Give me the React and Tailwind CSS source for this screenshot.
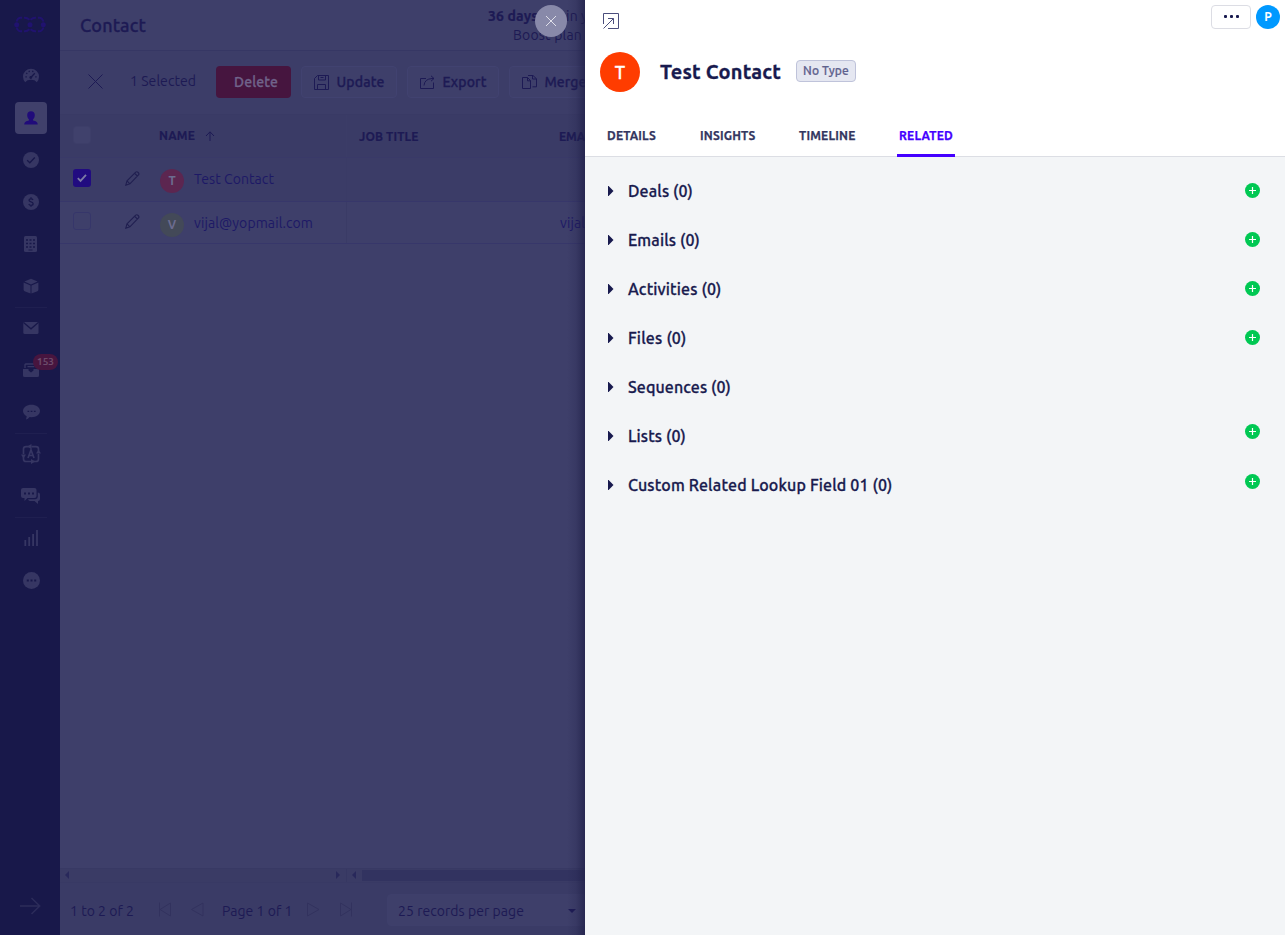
import { useLayoutEffect, useRef, useState } from "react";

/* Text set to a fixed advance width: the tracking is derived from its natural width. */
function Fit({ w, className = "", children }) {
  const ref = useRef(null);
  const [spacing, setSpacing] = useState(0);
  useLayoutEffect(() => {
    const el = ref.current;
    const natural = el.getBoundingClientRect().width;
    setSpacing((w - natural) / String(children).length);
  }, [w, children]);
  return (
    <span ref={ref} className={`inline-block shrink-0 whitespace-nowrap ${className}`} style={{ letterSpacing: spacing }}>
      {children}
    </span>
  );
}

const Svg = ({ className = "", box = "0 0 16 16", sw = 1, children }) => (
  <svg viewBox={box} className={`shrink-0 ${className}`} fill="none" stroke="currentColor" strokeWidth={sw}>
    {children}
  </svg>
);

const BG = "#18184a";

const GaugeIcon = () => (
  <Svg className="h-4 w-4">
    <path d="M2.2 14.200A8 8 0 1 1 13.800 14.200Q12 11.800 8 11.800T2.200 14.200Z" fill="currentColor" stroke="none" />
    <path d="M2.400 8.800h1.400M3.200 5l1.100.8M6 2.800l.4 1.300M10 2.800l-.4 1.300M13.600 8.800h-1.400M7.800 9.500l4-4.300" stroke={BG} strokeWidth="1.300" />
    <circle cx="7.800" cy="9.500" r="1.400" fill={BG} stroke="none" />
  </Svg>
);
const UserIcon = () => (
  <Svg className="h-[14px] w-[14px]" box="0 0 14 14">
    <path d="M7 0.3c2.4 0 3.8 1.5 3.8 3.7 0 1.7-.6 3.3-1.7 4.2v1.2c2.6.6 4.6 1.2 4.6 4H.3c0-2.8 2-3.4 4.6-4V8.2C3.8 7.300 3.200 5.700 3.200 4 3.200 1.800 4.600.3 7 .3Z" fill="currentColor" stroke="none" />
  </Svg>
);
const CheckIcon = () => (
  <Svg className="h-4 w-4">
    <circle cx="8" cy="8" r="8" fill="currentColor" stroke="none" />
    <path d="M4.200 8.300l2.600 2.500 5-5.300" stroke={BG} strokeWidth="1.300" />
  </Svg>
);
const DollarIcon = () => (
  <Svg className="h-4 w-4">
    <circle cx="8" cy="8" r="8" fill="currentColor" stroke="none" />
    <path d="M10 5.900C9.600 5.100 8.900 4.800 8 4.800c-1.200 0-2 .6-2 1.500 0 2.200 4.100 1.100 4.100 3.400 0 1-.9 1.600-2.100 1.600-1 0-1.800-.4-2.200-1.300M8 3.300v1.500M8 11.200v1.600" stroke={BG} strokeWidth="1.300" />
  </Svg>
);
const BuildingIcon = () => (
  <Svg className="mr-px h-4 w-[13px]" box="0 0 13 16">
    <rect width="13" height="16" rx="1.500" fill="currentColor" stroke="none" />
    <path d="M2 4h2M5.500 4h2M9 4h2M2 7.500h2M5.500 7.500h2M9 7.500h2M2 11h2M5.500 11h2M9 11h2" stroke={BG} strokeWidth="1.600" />
    <path d="M4.500 14h4" stroke={BG} />
  </Svg>
);
const BoxIcon = () => (
  <Svg className="h-4 w-4">
    <path d="M8 .8l6.600 2.600L8 6.600 1.400 3.400ZM.6 4.500l6.900 3v8L1.600 13.200Q.6 12.800.6 11.800ZM15.400 4.500l-6.900 3v8l5.900-2.300q1-.4 1-1.400Z" fill="currentColor" stroke="none" />
  </Svg>
);
const MailIcon = () => (
  <Svg className="h-3 w-4" box="0 0 16 12">
    <rect x=".3" width="15.200" height="12" rx="1.500" fill="currentColor" stroke="none" />
    <path d="M.8.8L8 6.800 15 .8" stroke={BG} strokeWidth="1.300" />
  </Svg>
);
const InboxIcon = () => (
  <Svg className="h-[14px] w-4" box="0 0 16 14">
    <path d="M2 5V1.800Q2 1 2.800 1H14V5M4.500 3.600h7" strokeWidth="1.300" />
    <path d="M0 6h5.500v1.500l2.500 2 2.500-2V6H16v6.500q0 1.500-1.500 1.500h-13Q0 14 0 12.500Z" fill="currentColor" stroke="none" />
  </Svg>
);
const ChatIcon = () => (
  <Svg className="h-4 w-[17px]" box="0 0 17 16">
    <path d="M8.500.8c4.700 0 8.500 2.700 8.500 6.200s-3.800 6.200-8.500 6.200l-1.900-.1Q5 15.500 3 15.500l.7-3.300C1.500 11 0 9.100 0 7 0 3.500 3.800.8 8.500.8Z" fill="currentColor" stroke="none" />
    <path d="M4.500 7.300h1.700M7.700 7.300h1.700M10.900 7.300h1.700" stroke={BG} strokeWidth="1.300" />
  </Svg>
);
const AutomationIcon = () => (
  <Svg className="h-5 w-5" box="0 0 20 20" sw="1.700">
    <path d="M7.500 2.600H5Q2.500 2.600 2.500 5v5M10.500 2.600H15q2.500 0 2.500 2.400v2M2.500 12.500V15q0 2.500 2.500 2.500h5M12.500 17.500H15q2.500 0 2.500-2.500v-5" />
    <path d="M6 2.600L10.500 0v5.200ZM2.500 14.500L0 10.500h5ZM14.500 17.500L10 20v-5ZM17.500 5.500L20 9.500h-5Z" fill="currentColor" stroke="none" />
    <path d="M7 14l3-8 3 8M8 11.500h4" />
  </Svg>
);
const ChatsIcon = () => (
  <Svg className="mr-[2px] h-4 w-[19px]" box="0 0 19 16">
    <path d="M2 0h11.500q2 0 2 2v6q0 2-2 2H6.500L3.500 13v-3H2Q0 10 0 8V2Q0 0 2 0Z" fill="currentColor" stroke="none" />
    <path d="M16.800 4.500q2.200 0 2.200 2V11q0 2-2 2v3l-3.500-3H9q-1.500 0-2-1.800h7.300q2.500 0 2.500-2.400Z" fill="currentColor" stroke="none" />
    <path d="M3 5.500h2M7 5.500h2M11 5.500h2" stroke={BG} strokeWidth="2" />
  </Svg>
);
const BarsIcon = () => (
  <Svg className="h-4 w-[14px]" box="0 0 14 16" sw="1.800">
    <path d="M1.300 16v-6M5.200 16V7M9.100 16V4M13 16V0" />
  </Svg>
);
const MoreIcon = () => (
  <Svg className="h-[17px] w-[17px]" box="0 0 17 17">
    <circle cx="8.500" cy="8.500" r="8.500" fill="currentColor" stroke="none" />
    <path d="M3.800 8.500h2M7.500 8.500h2M11.200 8.500h2" stroke={BG} strokeWidth="2" />
  </Svg>
);

const nav = [
  { icon: GaugeIcon },
  { icon: UserIcon, active: true },
  { icon: CheckIcon },
  { icon: DollarIcon },
  { icon: BuildingIcon },
  { icon: BoxIcon },
  { icon: MailIcon, divided: true },
  { icon: InboxIcon, badge: "153" },
  { icon: ChatIcon },
  { icon: AutomationIcon, divided: true },
  { icon: ChatsIcon },
  { icon: BarsIcon, divided: true },
  { icon: MoreIcon },
];

function Sidebar() {
  return (
    <aside className="flex w-[60px] shrink-0 flex-col bg-[#18184a] text-[#363663]">
      <div className="flex h-[55px] shrink-0 items-start pl-[14px] pt-4">
        <svg viewBox="0 0 32 17" className="h-[17px] w-8 text-[#20126f]" fill="none" stroke="currentColor" strokeWidth="1.900">
          <path d="M2.500 5.500Q4 1.700 6.500 1.700H8M2.500 11.500Q4 15.300 6.500 15.300H8M10 1.800q3-.3 5.500 1.900M10 15.200q3 .3 5.500-1.900M22 1.800q-3-.3-5.500 1.900M22 15.200q-3 .3-5.500-1.900M24 1.700h1.500q2.500 0 4 3.800M24 15.300h1.500q2.500 0 4-3.800" />
          <g fill="currentColor" stroke="none">
            <circle cx="2.700" cy="8.700" r="2.500" />
            <circle cx="16" cy="8.700" r="2.500" />
            <circle cx="29.300" cy="8.700" r="2.500" />
          </g>
        </svg>
      </div>
      <nav className="flex flex-col">
        {nav.map(({ icon: Icon, active, divided, badge }, i) => (
          <div key={i} className={`relative ml-[15px] flex h-[42px] w-8 items-center justify-center border-t pb-px ${divided ? "border-[#1f1f50]" : "border-transparent"}`}>
            {active ? (
              <span className="flex h-8 w-8 items-center justify-center rounded-[4px] bg-[#40406b] text-[#200b7a]">
                <Icon />
              </span>
            ) : (
              <Icon />
            )}
            {badge && (
              <span className="absolute left-[18px] top-[4px] flex h-4 w-[25px] items-center justify-center rounded-full bg-[#47153f] text-[10px] font-medium leading-none text-[#70506f] [-webkit-text-stroke:0.2px]">
                <Fit w={17}>{badge}</Fit>
              </span>
            )}
          </div>
        ))}
      </nav>
      <div className="mt-auto pb-[20px] pl-5">
        <svg viewBox="0 0 21 18" className="h-[18px] w-[21px] text-[#2c2c5a]" fill="none" stroke="currentColor" strokeWidth="1.500">
          <path d="M0 9h20M11.500 1l8.200 8-8.200 8" />
        </svg>
      </div>
    </aside>
  );
}

const SaveIcon = () => (
  <Svg className="h-[15px] w-[15px]" box="0 0 15 15">
    <path d="M3.500.5h11v14H.5V3.500ZM4.500.5v4.500h7V.5M3.500 14.500v-5h8v5M6.500 2.500h3" />
  </Svg>
);
const ExportIcon = () => (
  <Svg className="h-[15px] w-[15px]" box="0 0 15 15">
    <path d="M6 3.500H.5v10h13v-6M4 10.500Q4.500 4 12 3.500h2M11 .8l3 2.700-3 2.700" />
  </Svg>
);
const MergeIcon = () => (
  <Svg className="h-[15px] w-[15px]" box="0 0 15 15">
    <path d="M.5 2.500h5l3 3v8h-8ZM5.500 2.500v3.300h3M6 .5h5l3.500 3.300v8H10.500M10.500.5v3.500h4" />
  </Svg>
);

function ToolButton({ icon: Icon, label, textW, className }) {
  return (
    <button className={`flex h-8 shrink-0 items-center rounded-[4px] border border-[#414270] bg-[#3e3f6a] pl-[12px] text-[14px] font-medium [-webkit-text-stroke:0.3px] ${className}`}>
      <Icon />
      <Fit w={textW} className="ml-[7.500px]">{label}</Fit>
    </button>
  );
}

const Pencil = () => (
  <Svg className="h-[15px] w-[15px] text-[#201f50]" box="0 0 15 15" sw="1.100">
    <path d="M.8 14.200l1.200-4.300L10.700 1.200q1.200-1 2.500.3t.3 2.500L4.900 12.800ZM9.700 2.300l2.700 2.700M2 9.900l2.900 2.900" />
  </Svg>
);

function Row({ initial, avatar, name, nameW, email, className, checked, textPos }) {
  return (
    <div className={`flex shrink-0 items-center border-b border-[#37376a] ${className}`}>
      <div className="flex h-full w-[287px] shrink-0 items-center border-r border-[#3a3b66] pl-[13px]">
        {checked ? (
          <span className="mb-[3px] flex h-[18px] w-[18px] items-center justify-center rounded-[3px] bg-[#210b80] text-[#7c7aa5]">
            <Svg className="h-3 w-3" box="0 0 12 12" sw="1.800"><path d="M1.800 6.200l2.700 2.700 5.500-6" /></Svg>
          </span>
        ) : (
          <span className="mb-[3px] h-[18px] w-[18px] rounded-[3px] border border-[#36366a]" />
        )}
        <span className="mb-[2px] ml-[34px] flex"><Pencil /></span>
        <span className={`ml-[20px] flex h-6 w-6 items-center justify-center rounded-full text-[12px] font-bold text-[#6c6c90] ${avatar}`}>{initial}</span>
        <Fit w={nameW} className={`ml-[10px] text-[14px] text-[#1d1966] ${textPos}`}>{name}</Fit>
      </div>
      <div className="w-[213px] shrink-0" />
      {email && <Fit w={119} className={`text-[14px] text-[#1d1966] ${textPos}`}>{email}</Fit>}
    </div>
  );
}

const Tri = ({ d, className }) => (
  <svg viewBox="0 0 15 15" className={`mb-[4px] h-[15px] w-[15px] shrink-0 text-[#32325e] ${className}`} fill="none" stroke="currentColor">
    <path d={d} />
  </svg>
);

function ContactList() {
  return (
    <main className="relative flex w-[525px] shrink-0 flex-col overflow-hidden bg-[#3e3f6a] text-[#1d1a54]">
      <header className="flex h-[51px] shrink-0 border-b border-[#363764] pl-5">
        <Fit w={66} className="pt-[12px] text-[18px] font-medium leading-[26px] [-webkit-text-stroke:0.3px]">Contact</Fit>
        <div className="ml-[342px] flex w-[200px] shrink-0 flex-col items-start pt-[7px] text-[14px] leading-[19px]">
          <div className="flex">
            <Fit w={50} className="font-bold [-webkit-text-stroke:0.2px]">36 days</Fit>
            <Fit w={25} className="ml-[3px]">left</Fit>
            <Fit w={12}>in</Fit>
            <span className="ml-[3px] whitespace-nowrap">your trial</span>
          </div>
          <Fit w={69} className="ml-[25px]">Boost plan</Fit>
        </div>
      </header>

      <div className="flex h-[64px] shrink-0 items-center border-b border-[#393a65] bg-[#3c3d68] pb-px pl-[27.500px]">
        <Svg className="mb-[2px] h-[15px] w-[15px]" box="0 0 15 15"><path d="M.5.5l14 14M14.500.5l-14 14" /></Svg>
        <Fit w={66} className="mb-[2px] ml-[27.500px] text-[14px]">1 Selected</Fit>
        <button className="ml-5 flex h-8 w-[75px] shrink-0 items-center rounded-[4px] bg-[#46153f] pl-[18px] text-[14px] font-medium text-[#70638a] [-webkit-text-stroke:0.3px]">
          <Fit w={44}>Delete</Fit>
        </button>
        <ToolButton icon={SaveIcon} label="Update" textW={48} className="ml-[10px] w-[96px]" />
        <ToolButton icon={ExportIcon} label="Export" textW={44} className="ml-[10px] w-[92px]" />
        <ToolButton icon={MergeIcon} label="Merge" textW={42} className="ml-[10px] w-[92px]" />
      </div>

      <div className="flex h-[43px] shrink-0 items-center border-b border-[#37386a]/50 bg-[#3a3b66] text-[12px] font-bold [-webkit-text-stroke:0.2px]">
        <div className="flex h-full w-[287px] shrink-0 items-center border-r border-[#3b3c67] pl-[13px]">
          <span className="mb-[2px] h-[18px] w-[18px] rounded-[3px] border border-[#3d3e69] bg-[#40416c]" />
          <Fit w={36} className="ml-[68px]">NAME</Fit>
          <Svg className="ml-[10px] h-[10px] w-[10px]" box="0 0 10 10"><path d="M5 10V1M1 5l4-4.200L9 5" /></Svg>
        </div>
        <Fit w={59.5} className="ml-[12px] mt-px">JOB TITLE</Fit>
        <Fit w={36} className="ml-[140.500px] mt-px">EMAIL</Fit>
      </div>

      <Row checked className="h-11 bg-[#3b3c67]" initial="T" avatar="mt-[3px] bg-[#5c2650]" name="Test Contact" nameW={80} textPos="mb-px" />
      <Row className="h-[42px]" initial="V" avatar="mt-[5px] bg-[#434958]" name="vijal@yopmail.com" nameW={119} email="vijal@yopmail.com" textPos="mt-px" />

      <div className="flex-1" />

      <div className="flex h-[15px] shrink-0 items-center border-y border-[#383964] bg-[#3a3b65] text-[#28285b]">
        <div className="flex h-full w-[287px] shrink-0 items-center justify-between border-r border-[#363762] pb-px pl-[5px] pr-[6px]">
          <svg viewBox="0 0 4 8" className="h-2 w-1"><path d="M4 0v8L0 4Z" fill="currentColor" /></svg>
          <svg viewBox="0 0 4 8" className="h-2 w-1"><path d="M0 0v8l4-4Z" fill="currentColor" /></svg>
        </div>
        <svg viewBox="0 0 4 8" className="mb-px ml-[5px] h-2 w-1"><path d="M4 0v8L0 4Z" fill="currentColor" /></svg>
        <div className="ml-[6px] h-[11px] flex-1 bg-[#323360]" />
      </div>

      <footer className="flex h-[52px] shrink-0 items-center bg-[#3a3b66] pl-[10px] pt-[4px] text-[14px]">
        <Fit w={64}>1 to 2 of 2</Fit>
        <Tri d="M2.500.5v14M13.500 1v13L3 7.500Z" className="ml-[23px]" />
        <Tri d="M13 1v13L1.500 7.500Z" className="ml-[18px]" />
        <Fit w={70.5} className="ml-[17px]">Page 1 of 1</Fit>
        <Tri d="M1.500 1v13L13 7.500Z" className="ml-[13.500px]" />
        <Tri d="M12.500.5v14M1.500 1v13L12 7.500Z" className="ml-[18px]" />
        <div className="mb-[2px] ml-[33px] flex h-8 w-[200px] shrink-0 items-center rounded-[4px] border border-[#3e3f6b] bg-[#3e3f6a] pl-[10px]">
          <Fit w={126} className="mt-[2px]">25 records per page</Fit>
          <svg viewBox="0 0 8 4" className="ml-[44px] mt-px h-1 w-2"><path d="M0 0h8L4 4Z" fill="currentColor" /></svg>
        </div>
      </footer>

      <div className="pointer-events-none absolute inset-y-0 right-0 w-[18px] bg-gradient-to-r from-transparent via-[#202049]/20 to-[#202049]/75" />
      <button className="absolute left-[475px] top-[5px] flex h-8 w-8 items-center justify-center rounded-full bg-[#8889a9] text-[#e0e0ea]">
        <Svg className="h-[10px] w-[10px]" box="0 0 10 10"><path d="M0 0l10 10M10 0L0 10" /></Svg>
      </button>
    </main>
  );
}

const tabs = [
  { label: "DETAILS", w: 49, box: "w-[54px]" },
  { label: "INSIGHTS", w: 55.5, box: "w-[60px]" },
  { label: "TIMELINE", w: 56.5, box: "w-[61px]" },
  { label: "RELATED", w: 54, box: "w-[58px]", active: true },
];

const related = [
  { label: "Deals (0)", w: 65, add: "mb-px" },
  { label: "Emails (0)", w: 72, add: "mb-px" },
  { label: "Activities (0)", w: 93.5, add: "mb-px" },
  { label: "Files (0)", w: 58.5, add: "mb-px" },
  { label: "Sequences (0)", w: 103 },
  { label: "Lists (0)", w: 58, add: "mb-[9px]" },
  { label: "Custom Related Lookup Field 01 (0)", w: 264.5, add: "mb-[7px]" },
];

function ContactPanel() {
  return (
    <section className="flex min-w-0 flex-1 flex-col bg-[#f3f5f7] text-[#181a4e]">
      <header className="flex h-[157px] shrink-0 flex-col border-b border-[#dcdee4] bg-white">
        <div className="flex h-[52px] shrink-0 items-start pl-[18px] pr-[5px] pt-[5px]">
          <Svg className="mt-2 h-4 w-4 text-[#4b4e7c]" box="0 0 16 16">
            <path d="M.5 11V.5h15v15H5M.5 15.500L10.500 5.500M5 5.500h5.500v5.500" />
          </Svg>
          <button className="ml-auto flex h-6 w-10 items-center justify-center gap-[3px] rounded-[4px] border border-[#dcdde4] pb-px">
            <i className="h-[3px] w-[3px] rounded-[1px] bg-[#181a4e]" />
            <i className="h-[3px] w-[3px] rounded-[1px] bg-[#181a4e]" />
            <i className="h-[3px] w-[3px] rounded-[1px] bg-[#181a4e]" />
          </button>
          <span className="ml-[5px] flex h-6 w-6 items-center justify-center rounded-full bg-[#0099ff] text-[12px] font-bold text-white">P</span>
        </div>
        <div className="flex h-10 shrink-0 items-center pl-[15px]">
          <span className="flex h-10 w-10 items-center justify-center rounded-full bg-[#ff3c00] text-[18px] font-medium text-white [-webkit-text-stroke:0.3px]">T</span>
          <Fit w={121} className="ml-5 text-[20px] font-bold leading-10 [-webkit-text-stroke:0.3px]">Test Contact</Fit>
          <span className="mb-[2px] ml-[15px] flex h-[22px] w-[60px] items-center rounded-[4px] border border-[#bfc3da] bg-[#e5e7f1] pl-[6px] text-[12px] font-medium text-[#5e618d] [-webkit-text-stroke:0.2px]">
            <Fit w={46}>No Type</Fit>
          </span>
        </div>
        <div className="ml-5 mt-[23px] flex shrink-0 gap-[39px]">
          {tabs.map((t) => (
            <div key={t.label} className={`flex h-[42px] shrink-0 items-center border-b-[3px] pl-[2px] text-[12px] font-bold [-webkit-text-stroke:0.25px] ${t.box} ${t.active ? "border-[#4400ff] text-[#4400ff]" : "border-transparent text-[#33365f]"}`}>
              <Fit w={t.w} className="mt-[3px]">{t.label}</Fit>
            </div>
          ))}
        </div>
      </header>
      <div className="flex flex-col pt-[9px]">
        {related.map((r) => (
          <div key={r.label} className="flex h-[49px] items-center pl-[23px] pr-[25px]">
            <svg viewBox="0 0 6 10" className="h-[10px] w-[6px] shrink-0"><path d="M0 0h.6L5.500 5 .6 10H0Z" fill="currentColor" /></svg>
            <Fit w={r.w} className="ml-[14px] text-[16px] font-medium [-webkit-text-stroke:0.3px]">{r.label}</Fit>
            {r.add && (
              <svg viewBox="0 0 15 15" className={`ml-auto h-[15px] w-[15px] ${r.add}`}>
                <circle cx="7.500" cy="7.500" r="7.500" fill="#00c853" />
                <path d="M4 7.500h7M7.500 4v7" stroke="white" strokeWidth="1.200" />
              </svg>
            )}
          </div>
        ))}
      </div>
    </section>
  );
}

export default function App() {
  return (
    <div className="flex h-[935px] w-[1285px] overflow-hidden font-['Ubuntu','Noto_Sans',sans-serif]">
      <Sidebar />
      <ContactList />
      <ContactPanel />
    </div>
  );
}
